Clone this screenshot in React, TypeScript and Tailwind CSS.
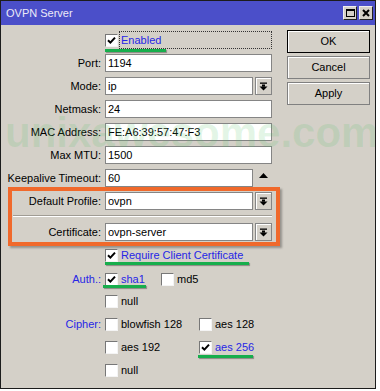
import type { ReactNode } from "react";

const BLUE = "text-[#2626e6]";

function CheckBox({ checked = false }: { checked?: boolean }) {
  return (
    <span className="flex h-[13px] w-[13px] shrink-0 items-center justify-center border border-[#777] border-b-[#f4f4f4] border-r-[#f4f4f4] bg-white">
      {checked && (
        <svg width="9" height="9" viewBox="0 0 9 9">
          <path d="M1 4.2 L3.4 6.6 L8 1.6" fill="none" stroke="#000" strokeWidth="2" />
        </svg>
      )}
    </span>
  );
}

function CheckItem({ label, checked = false }: { label: string; checked?: boolean }) {
  return (
    <div className="flex items-center">
      <CheckBox checked={checked} />
      <span className={`ml-[3px] ${checked ? BLUE : "text-black"}`}>{label}</span>
    </div>
  );
}

function TextBox({ value, w }: { value: string; w: string }) {
  return (
    <div className={`${w} flex h-[18px] items-center border border-[#858585] bg-white pl-[2px] text-black`}>
      {value}
    </div>
  );
}

function DropButton() {
  return (
    <div className="ml-[2px] flex h-[18px] w-[17px] items-center justify-center border border-[#858585] bg-[#d4d0c8] shadow-[inset_1px_1px_0_#fff]">
      <svg width="9" height="9" viewBox="0 0 9 9">
        <rect x="1" y="0.5" width="7" height="1.3" fill="#000" />
        <rect x="3" y="2.5" width="3" height="2.2" fill="#000" />
        <polygon points="0.5,4.5 8.5,4.5 4.5,8.5" fill="#000" />
      </svg>
    </div>
  );
}

function Field({ label, labelW, children }: { label: string; labelW: string; children: ReactNode }) {
  return (
    <div className="flex h-[18px] items-center">
      <div className={`${labelW} text-right text-black`}>{label}</div>
      <div className="ml-[4px] flex items-center">{children}</div>
    </div>
  );
}

function Underline({ className }: { className: string }) {
  return (
    <span
      className={`absolute h-[3px] bg-[#17ae4c] shadow-[1px_1px_1px_rgba(0,0,0,0.35)] ${className}`}
    />
  );
}

function WinButton({ label, primary = false }: { label: string; primary?: boolean }) {
  return (
    <div
      className={`flex h-[23px] w-[83px] items-center justify-center bg-[#d4d0c8] text-black shadow-[inset_1px_1px_0_#fff] ${
        primary ? "border border-black" : "border border-[#808080]"
      }`}
    >
      {label}
    </div>
  );
}

export default function App() {
  return (
    <div className="h-[391px] w-[380px] bg-white font-['Liberation_Sans',Arial,sans-serif] text-[11px]">
      <div className="flex h-[389px] w-[376px] flex-col border border-[#1c1c1c]">
        {/* title bar */}
        <div className="flex h-[24px] items-center justify-between bg-[#4b4fc9] pl-[5px] pr-[2px]">
          <span className="text-[11px] text-[#eceaf8]">OVPN Server</span>
          <div className="flex gap-[2px]">
            <div className="flex h-[14px] w-[14px] items-center justify-center border border-[#222] border-l-[#eee] border-t-[#eee] bg-[#d4d0c8]">
              <span className="h-[8px] w-[9px] border border-t-2 border-black" />
            </div>
            <div className="flex h-[14px] w-[14px] items-center justify-center border border-[#222] border-l-[#eee] border-t-[#eee] bg-[#d4d0c8]">
              <svg width="8" height="8" viewBox="0 0 8 8">
                <path d="M1 1 L7 7 M7 1 L1 7" stroke="#000" strokeWidth="2" />
              </svg>
            </div>
          </div>
        </div>

        {/* body */}
        <div className="relative flex flex-1 overflow-hidden bg-[#d4d0c8]">
          <div className="flex w-[286px] flex-col pt-[6px]">
            <div className="ml-[104px] flex h-[18px] items-center">
              <div className="relative">
                <CheckBox checked />
                <Underline className="left-0 top-[15px] w-[61px]" />
              </div>
              <div className={`ml-[1px] flex h-[18px] w-[153px] items-center border border-dotted border-[#333] pl-[1px] ${BLUE}`}>
                Enabled
              </div>
            </div>

            <div className="mt-[5px] flex flex-col gap-[5px]">
              <Field label="Port:" labelW="w-[100px]">
                <TextBox value="1194" w="w-[167px]" />
              </Field>
              <Field label="Mode:" labelW="w-[100px]">
                <TextBox value="ip" w="w-[148px]" />
                <DropButton />
              </Field>
              <Field label="Netmask:" labelW="w-[100px]">
                <TextBox value="24" w="w-[167px]" />
              </Field>
              <Field label="MAC Address:" labelW="w-[100px]">
                <TextBox value="FE:A6:39:57:47:F3" w="w-[167px]" />
              </Field>
              <Field label="Max MTU:" labelW="w-[100px]">
                <TextBox value="1500" w="w-[167px]" />
              </Field>
              <Field label="Keepalive Timeout:" labelW="w-[100px]">
                <TextBox value="60" w="w-[148px]" />
                <div className="ml-[2px] flex h-[18px] w-[17px] justify-center pt-[4px]">
                  <svg width="9" height="5" viewBox="0 0 9 5">
                    <polygon points="0,5 9,5 4.5,0" fill="#000" />
                  </svg>
                </div>
              </Field>
            </div>

            {/* highlighted group */}
            <div className="ml-[7px] w-[272px] border-4 border-[#f0692b] py-[1px] shadow-[2px_2px_2px_rgba(0,0,0,0.3)]">
              <Field label="Default Profile:" labelW="w-[89px]">
                <TextBox value="ovpn" w="w-[148px]" />
                <DropButton />
              </Field>
              <div className="ml-[1px] mt-[5px] h-[2px] w-[259px] border-b border-t border-b-white border-t-[#a09c94]" />
              <div className="mt-[6px]">
                <Field label="Certificate:" labelW="w-[89px]">
                  <TextBox value="ovpn-server" w="w-[148px]" />
                  <DropButton />
                </Field>
              </div>
            </div>

            <div className="ml-[104px] flex h-[18px] items-center">
              <div className="relative">
                <CheckItem label="Require Client Certificate" checked />
                <Underline className="left-0 top-[15px] w-[144px]" />
              </div>
            </div>

            <div className="mt-[6px] flex h-[18px] items-center">
              <div className={`w-[100px] text-right ${BLUE}`}>Auth.:</div>
              <div className="relative ml-[4px] w-[56px]">
                <CheckItem label="sha1" checked />
                <Underline className="-left-[2px] top-[14px] w-[43px]" />
              </div>
              <CheckItem label="md5" />
            </div>
            <div className="ml-[104px] mt-[4px] flex h-[18px] items-center">
              <CheckItem label="null" />
            </div>
            <div className="mt-[5px] flex h-[18px] items-center">
              <div className={`w-[100px] text-right ${BLUE}`}>Cipher:</div>
              <div className="ml-[4px] w-[94px]">
                <CheckItem label="blowfish 128" />
              </div>
              <CheckItem label="aes 128" />
            </div>
            <div className="mt-[5px] flex h-[18px] items-center">
              <div className="ml-[104px] w-[94px]">
                <CheckItem label="aes 192" />
              </div>
              <div className="relative">
                <CheckItem label="aes 256" checked />
                <Underline className="-left-[1px] top-[16px] w-[55px]" />
              </div>
            </div>
            <div className="ml-[104px] mt-[5px] flex h-[18px] items-center">
              <CheckItem label="null" />
            </div>
          </div>

          <div className="flex w-[83px] flex-col gap-[3px] pt-[5px]">
            <WinButton label="OK" primary />
            <WinButton label="Cancel" />
            <WinButton label="Apply" />
          </div>

          {/* watermark */}
          <div className="pointer-events-none absolute left-[4px] top-[87px] whitespace-nowrap text-[42px] font-bold leading-none text-[rgba(80,195,100,0.16)]">
            unixawesome.com
          </div>
        </div>
      </div>
    </div>
  );
}
